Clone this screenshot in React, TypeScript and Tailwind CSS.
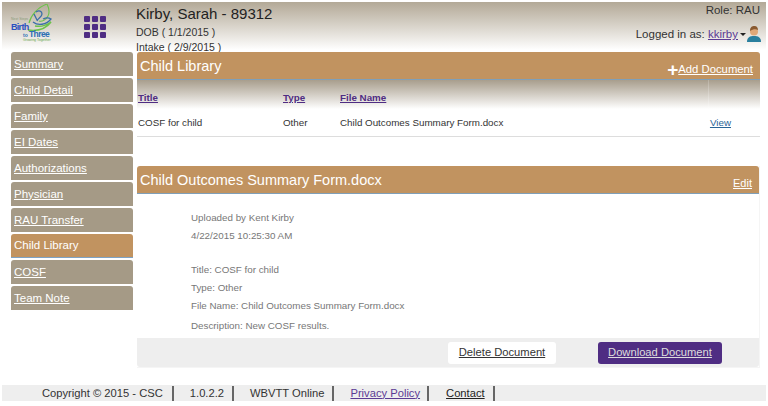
import React from 'react';

const navItems = [
    'Summary',
    'Child Detail',
    'Family',
    'EI Dates',
    'Authorizations',
    'Physician',
    'RAU Transfer',
    'Child Library',
    'COSF',
    'Team Note',
];

const Logo = () => (
    <div className="relative h-[40px] w-[46px]">
        <svg viewBox="0 0 46 40" className="absolute inset-0 h-full w-full" fill="none">
            <path d="M18 19 C20 11 27 3 36 0 C38 4 39 8 37 12 C35 16 31 18 28 17" stroke="#6cc24a" strokeWidth="1.1" />
            <path d="M17 26 C24 27 34 26 40 18 C36 21 30 23 24 22" stroke="#6cc24a" strokeWidth="1.5" />
            <path d="M25 8 C28 6 31 7 31 10 C31 13 27 14 26 17 M23 10 L26 16 M22 18 C27 22 35 21 40 15 C37 13 34 14 32 15" stroke="#3a6ea8" strokeWidth="1.3" />
        </svg>
        <span className="absolute left-0 top-[14px] text-[3.5px] leading-none text-[#8a9a7a]">Next Steps</span>
        <span className="absolute left-0 top-[19px] text-[9px] font-bold leading-[8px] tracking-[-0.7px] text-[#2b4fc0]">Birth</span>
        <span className="absolute left-[12px] top-[28.5px] text-[5px] font-bold leading-none text-[#2b6fb5]">to</span>
        <span className="absolute left-[18px] top-[26px] text-[8.5px] font-bold leading-[8px] tracking-[-0.6px] text-[#2b6fb5]">Three</span>
        <span className="absolute left-[12px] top-[35px] text-[3.5px] leading-none text-[#6aa84f]">Growing Together</span>
    </div>
);

const AppsIcon = () => (
    <div className="grid grid-cols-3 gap-[2px]">
        {Array.from({ length: 9 }).map((_, i) => (
            <span key={i} className="h-[6px] w-[6px] rounded-[1px] bg-[#4f2d83]" />
        ))}
    </div>
);

const UserIcon = () => (
    <svg viewBox="0 0 14 16" className="h-[16px] w-[14px]">
        <path d="M0 16 C0 11 3 10 7 10 C11 10 14 11 14 16 Z" fill="#2a7f9e" />
        <circle cx="7" cy="5.5" r="4" fill="#e0a878" />
        <path d="M3 5 C3 1 5 0 7.5 0 C10 0 11 2 11 4 C9 3 6 3 3 5 Z" fill="#8a5a30" />
    </svg>
);

const Sidebar = () => (
    <ul className="flex w-[122px] shrink-0 flex-col gap-[2px]">
        {navItems.map((item) => {
            const active = item === 'Child Library';
            return (
                <li
                    key={item}
                    className={
                        active
                            ? 'flex h-[24px] items-center rounded-t-[3px] border-b border-[#7fa3c4] bg-[#c19360] px-[3px] pt-[1px] text-[11.5px] text-white'
                            : 'flex h-[24px] items-center rounded-t-[3px] bg-[#a59a86] px-[3px] pt-[1px] text-[11.5px] text-white underline'
                    }
                >
                    {item}
                </li>
            );
        })}
    </ul>
);

const PanelHeader = ({ title, action }: { title: string; action: React.ReactNode }) => (
    <div className="flex h-[28px] items-center justify-between rounded-t-[3px] border-b border-[#7f9fb8] bg-[#c19360] pl-[3px] pr-[7px] text-white">
        <span className="pt-[2px] text-[14.5px]">{title}</span>
        {action}
    </div>
);

const Meta = ({ children, className }: { children: React.ReactNode; className: string }) => (
    <p className={`text-[9.8px] leading-[12px] text-[#777] ${className}`}>{children}</p>
);

const App = () => (
    <div className="h-[406px] w-[768px] overflow-hidden bg-white pt-[2px] font-['Liberation_Sans',Arial,sans-serif] text-[#333]">
        <header className="mx-[2px] flex h-[48px] bg-gradient-to-b from-[#b3a997] to-white">
            <div className="ml-[9px] mt-[2px]">
                <Logo />
            </div>
            <div className="ml-[27px] mt-[14px]">
                <AppsIcon />
            </div>
            <div className="ml-[30px] flex-1 pt-[2px]">
                <div className="text-[15px] leading-[20px] text-[#222]">Kirby, Sarah - 89312</div>
                <div className="pt-[1px] text-[10.5px] leading-[15px]">DOB ( 1/1/2015 )</div>
                <div className="text-[10.5px] leading-[15px]">Intake ( 2/9/2015 )</div>
            </div>
            <div className="flex flex-col items-end pr-[5px] pt-[1px] text-[11.5px]">
                <span className="mr-[1px] leading-[14px]">Role: RAU</span>
                <span className="mt-[9px] flex items-center leading-[16px]">
                    Logged in as:&nbsp;<span className="text-[#5b3a94] underline">kkirby</span>
                    <span className="ml-[2px] mr-[1px] h-0 w-0 border-x-[3px] border-t-[3px] border-x-transparent border-t-[#222]" />
                    <UserIcon />
                </span>
            </div>
        </header>

        <div className="mt-[2px] flex h-[333px] pl-[11px]">
            <Sidebar />
            <main className="ml-[4px] w-[623px]">
                <PanelHeader
                    title="Child Library"
                    action={
                        <span className="flex items-center pt-[8px] text-[11.3px]">
                            <span className="text-[19px] font-bold leading-[14px]">+</span>
                            <span className="underline">Add Document</span>
                        </span>
                    }
                />
                <div className="grid h-[29px] grid-cols-[145px_57px_1fr_52px] items-center bg-gradient-to-b from-[#a89e8d] to-white pl-[1px] text-[9.8px] font-bold text-[#4f2d83]">
                    <span className="pt-[7px] underline">Title</span>
                    <span className="pt-[7px] underline">Type</span>
                    <span className="pt-[7px] underline">File Name</span>
                    <span className="h-full border-l border-white/20" />
                </div>
                <div className="grid h-[28px] grid-cols-[145px_57px_1fr_auto] items-center border-b border-[#ddd] pl-[1px] pr-[29px] pt-[2px] text-[9.8px]">
                    <span>COSF for child</span>
                    <span>Other</span>
                    <span>Child Outcomes Summary Form.docx</span>
                    <span className="text-[#2a6496] underline">View</span>
                </div>

                <div className="mt-[29px] border-b border-r border-[#f5f5f5]">
                    <PanelHeader
                        title="Child Outcomes Summary Form.docx"
                        action={<span className="pt-[7px] text-[11px] underline">Edit</span>}
                    />
                    <div className="pl-[54px]">
                        <Meta className="mt-[18px]">Uploaded by Kent Kirby</Meta>
                        <Meta className="mt-[6px]">4/22/2015 10:25:30 AM</Meta>
                        <Meta className="mt-[22px]">Title: COSF for child</Meta>
                        <Meta className="mt-[6px]">Type: Other</Meta>
                        <Meta className="mt-[6px]">File Name: Child Outcomes Summary Form.docx</Meta>
                        <Meta className="mt-[8px]">Description: New COSF results.</Meta>
                    </div>
                    <div className="mt-[6px] flex h-[29px] items-center justify-end rounded-b-[3px] bg-[#eeeeee] pr-[37px] text-[11.2px]">
                        <span className="flex h-[22px] w-[108px] items-center justify-center rounded-[3px] bg-white text-[#333] underline">
                            Delete Document
                        </span>
                        <span className="ml-[42px] flex h-[22px] w-[124px] items-center justify-center rounded-[3px] bg-[#4f2d83] text-[#ddd] underline">
                            Download Document
                        </span>
                    </div>
                </div>
            </main>
        </div>

        <footer className="mx-[2px] flex h-[16px] items-center bg-[#eeeeee] pl-[40px] text-[11.2px] text-[#333]">
            <span className="border-r-2 border-[#666] pr-[9px] leading-[15px]">Copyright © 2015 - CSC</span>
            <span className="border-r-2 border-[#666] pl-[16px] pr-[8px] leading-[15px]">1.0.2.2</span>
            <span className="border-r-2 border-[#666] pl-[16px] pr-[8px] leading-[15px]">WBVTT Online</span>
            <span className="border-r-2 border-[#666] pl-[16px] pr-[7px] leading-[15px] text-[#5b3a94]"><span className="underline">Privacy Policy</span></span>
            <span className="border-r-2 border-[#666] pl-[17px] pr-[8px] leading-[15px] text-[#222]"><span className="underline">Contact</span></span>
        </footer>
    </div>
);

export default App;
